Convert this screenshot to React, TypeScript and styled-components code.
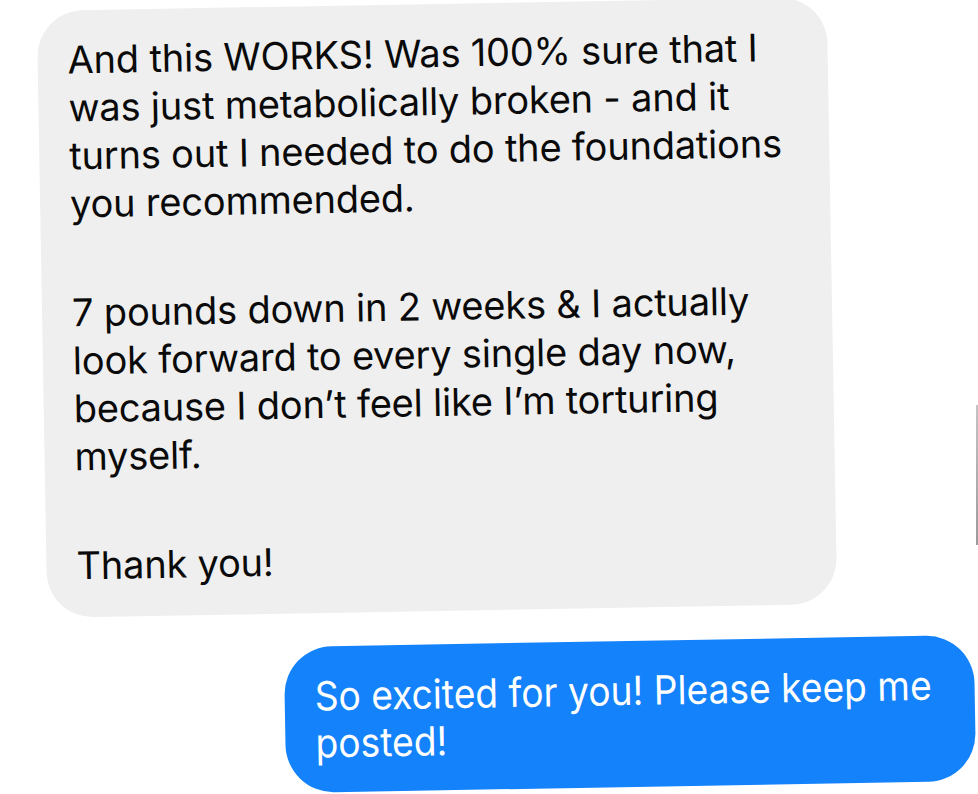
import React from "react";
import styled, { createGlobalStyle } from "styled-components";

const Global = createGlobalStyle`
  html, body { margin: 0; padding: 0; background: #ffffff; }
  body {
    width: 978px;
    height: 794px;
    overflow: hidden;
    font-family: Inter, "Noto Sans", sans-serif;
    -webkit-font-smoothing: antialiased;
  }
`;

const Page = styled.main`
  position: relative;
  box-sizing: border-box;
  width: 978px;
  height: 794px;
  display: flex;
  flex-direction: column;
  padding: 4px 3px 0 42px;
`;

const Received = styled.div`
  box-sizing: border-box;
  width: 790px;
  background: #efefef;
  color: #0a0a0a;
  border-radius: 46px;
  padding: 25px 20px 28px 30px;
  transform: rotate(-1deg);
  font-size: 38px;
  line-height: 48px;
  letter-spacing: -0.2px;
`;

const Sent = styled.div`
  box-sizing: border-box;
  align-self: flex-end;
  width: 690px;
  margin-top: 30px;
  background: #1482fb;
  color: #ffffff;
  border-radius: 48px;
  padding: 26px 20px 26px 30px;
  transform: rotate(-1deg);
  font-size: 40px;
  line-height: 47px;
`;

const Paragraph = styled.div`
  & + & {
    margin-top: 61px;
  }
`;

const Line = styled.div<{ $squeeze?: number }>`
  white-space: nowrap;
  transform-origin: left center;
  transform: ${(p) => (p.$squeeze ? `scaleX(${p.$squeeze})` : "none")};
`;

const EdgeMark = styled.div`
  position: absolute;
  right: 0;
  top: 405px;
  width: 2px;
  height: 140px;
  background: linear-gradient(#c4c4c4, #9a9a9a);
`;

const receivedText: string[][] = [
  [
    "And this WORKS! Was 100% sure that I",
    "was just metabolically broken - and it",
    "turns out I needed to do the foundations",
    "you recommended.",
  ],
  [
    "7 pounds down in 2 weeks & I actually",
    "look forward to every single day now,",
    "because I don\u2019t feel like I\u2019m torturing",
    "myself.",
  ],
  ["Thank you!"],
];

const sentText = ["So excited for you! Please keep me", "posted!"];

export default function App() {
  return (
    <>
      <Global />
      <Page>
        <Received>
          {receivedText.map((para, i) => (
            <Paragraph key={i}>
              {para.map((l) => (
                <Line key={l}>{l}</Line>
              ))}
            </Paragraph>
          ))}
        </Received>
        <Sent>
          {sentText.map((l) => (
            <Line key={l} $squeeze={0.93}>
              {l}
            </Line>
          ))}
        </Sent>
        <EdgeMark />
      </Page>
    </>
  );
}
